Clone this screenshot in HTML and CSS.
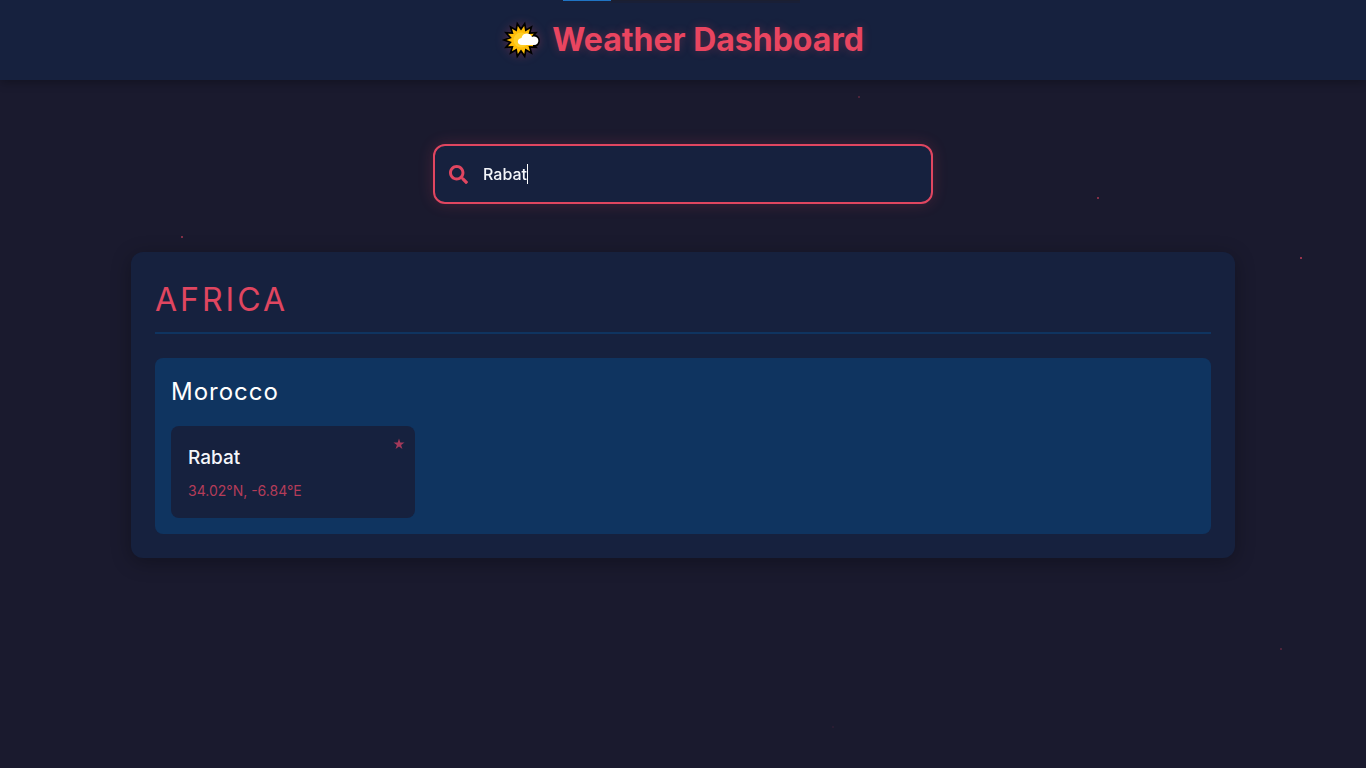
FILE: index.html
```html
<!DOCTYPE html>
<html lang="en">
<head>
<meta charset="utf-8">
<meta name="viewport" content="width=device-width, initial-scale=1">
<title>Weather Dashboard</title>
<link rel="stylesheet" href="styles.css">
</head>
<body>
<div class="particles" aria-hidden="true">
  <i class="particle p1"></i><i class="particle p2"></i><i class="particle p3"></i><i class="particle p4"></i><i class="particle p5"></i><i class="particle p6"></i>
</div>
<div class="loading-bar" aria-hidden="true"><span class="loading-fill"></span></div>
<header class="header">
  <h1 class="title">
    <svg class="sun" viewBox="-1 0 38 38" aria-hidden="true">
      <path d="M18 9.500L21.200 4.900L22.200 10.400L27 7.800L25.500 13L31 12.700L27.200 17L32.500 19L27.200 21L31 25.300L25.500 25L27 30.200L22.200 27.600L21.200 33.100L18 28.500L14.800 33.100L13.800 27.600L9 30.200L10.500 25L5 25.300L8.800 21L3.500 19L8.800 17L5 12.700L10.500 13L9 7.800L13.800 10.400L14.800 4.900Z" fill="#ffbd08" stroke="#000" stroke-width="3.400" stroke-linejoin="miter" paint-order="stroke"/>
      <circle cx="18" cy="19" r="7.500" fill="#ffce25"/>
      <path d="M30 13.500C37 13 38.500 21 35 24.500Q33 26 30 26" fill="#000"/>
      <path d="M19 24C13.500 24 13.500 17.500 18.500 17C19.500 11.500 27 11 29 16C34 14 37 19 34.500 22.500Q33 24 31 24Z" fill="#fff"/>
    </svg>
    <span>Weather Dashboard</span>
  </h1>
</header>
<main class="main">
  <form class="search">
    <label class="search-label" for="city">
      <svg class="search-icon" viewBox="0 0 512 512" role="img" aria-label="Search city"><path fill="currentColor" d="M505 442.700L405.300 343c-4.500-4.500-10.600-7-17-7H372c27.600-35.300 44-79.700 44-128C416 93.100 322.900 0 208 0S0 93.100 0 208s93.100 208 208 208c48.300 0 92.700-16.400 128-44v16.300c0 6.400 2.500 12.500 7 17l99.700 99.700c9.400 9.400 24.600 9.400 33.900 0l28.300-28.300c9.400-9.400 9.400-24.600.1-34zM208 336c-70.700 0-128-57.200-128-128 0-70.700 57.200-128 128-128 70.700 0 128 57.200 128 128 0 70.700-57.200 128-128 128z"/></svg>
    </label>
    <input class="search-input" id="city" type="text" value="Rabat" autocomplete="off" spellcheck="false">
    <span class="caret" aria-hidden="true"></span>
  </form>
  <section class="continent">
    <h2 class="continent-name">AFRICA</h2>
    <section class="country">
      <h3 class="country-name">Morocco</h3>
      <div class="cities">
        <a class="city" href="#rabat">
          <span class="city-name">Rabat</span>
          <span class="coords">34.02°N, -6.84°E</span>
          <svg class="star" viewBox="0 0 12 12" aria-hidden="true"><path fill="currentColor" d="M6 .5L7.300 4.500H11.500L8.100 7L9.400 11L6 8.500L2.600 11L3.900 7L.5 4.500H4.700Z"/></svg>
        </a>
      </div>
    </section>
  </section>
</main>
</body>
</html>
```
FILE: styles.css
```css
* { box-sizing: border-box; }
body {
  margin: 0;
  min-height: 100vh;
  background: #1a1a2e;
  color: #fff;
  font-family: Inter, "Liberation Sans", sans-serif;
}
h1, h2, h3 { margin: 0; }
.header {
  display: flex;
  justify-content: center;
  padding: 16px;
  background: #16213e;
  box-shadow: 0 2px 10px rgba(0, 0, 0, .3);
}
.title {
  display: flex;
  align-items: center;
  gap: 12px;
  font-size: 32px;
  line-height: 48px;
  font-weight: 700;
  color: #e94560;
  text-shadow: 0 0 10px rgba(233, 69, 96, .3);
}
.sun {
  width: 38px;
  height: 38px;
  overflow: visible;
  filter: drop-shadow(0 0 5px rgba(233, 69, 96, .3));
}
.loading-bar {
  position: absolute;
  top: 0;
  left: calc(50% - 120px);
  width: 237px;
  height: 1px;
  background: #1b1f2e;
}
.loading-bar::after {
  content: "";
  position: absolute;
  inset: 0 0 auto 48px;
  height: 3px;
  background: #1b2033;
  opacity: .7;
}
.loading-fill {
  display: block;
  width: 48px;
  height: 1px;
  background: #1f74c4;
}
.main {
  max-width: 1168px;
  margin: 0 auto;
  padding: 64px 32px 32px;
}
.search {
  position: relative;
  display: flex;
  align-items: center;
  max-width: 500px;
  height: 60px;
  margin: 0 auto 48px;
  border: 2px solid #e04660;
  border-radius: 12px;
  background: #16213e;
  box-shadow: 0 0 15px rgba(233, 69, 96, .2);
}
.search-label {
  display: flex;
  padding: 0 15px 0 14px;
  color: #e04660;
}
.search-icon {
  width: 19px;
  height: 19px;
}
.search-input {
  flex: 1;
  min-width: 0;
  height: 100%;
  padding: 0 16px 0 0;
  border: 0;
  outline: 0;
  background: none;
  color: #f4f6fa;
  font: 500 16px Inter, "Liberation Sans", sans-serif;
}
.caret {
  position: absolute;
  left: 92px;
  top: 18px;
  width: 1px;
  height: 20px;
  background: #fff;
}
.continent {
  padding: 24px;
  border-radius: 12px;
  background: #16213e;
  box-shadow: 0 4px 20px rgba(0, 0, 0, .3);
}
.continent-name {
  margin-bottom: 24px;
  padding-bottom: 8px;
  border-bottom: 2px solid #0f3460;
  font-size: 32px;
  line-height: 48px;
  font-weight: 400;
  letter-spacing: 3px;
  color: #e04660;
}
.country {
  padding: 16px;
  border-radius: 8px;
  background: #0f3460;
}
.country-name {
  margin-bottom: 16px;
  font-size: 24px;
  line-height: 36px;
  font-weight: 400;
  letter-spacing: 1px;
  color: #fff;
}
.cities {
  display: grid;
  grid-template-columns: repeat(auto-fill, minmax(240px, 1fr));
  gap: 16px;
}
.city {
  position: relative;
  display: flex;
  flex-direction: column;
  gap: 6px;
  padding: 16px 17px;
  border-radius: 8px;
  background: #16213e;
  color: #f4f6fa;
  text-decoration: none;
}
.city-name {
  font-size: 19px;
  line-height: 32px;
  font-weight: 500;
}
.coords {
  font-size: 14px;
  line-height: 22px;
  color: #b43c59;
}
.star {
  position: absolute;
  top: 12px;
  right: 10px;
  width: 12px;
  height: 12px;
  color: #a3395a;
}
.particles {
  position: fixed;
  inset: 0;
  pointer-events: none;
}
.particle {
  position: absolute;
  width: 2px;
  height: 2px;
  background: #e94560;
}
.p1 { left: 858px; top: 96px; opacity: .25; }
.p2 { left: 1097px; top: 197px; opacity: .5; }
.p3 { left: 181px; top: 236px; opacity: .5; }
.p4 { left: 1300px; top: 257px; opacity: .6; }
.p5 { left: 1280px; top: 648px; opacity: .25; }
.p6 { left: 832px; top: 726px; opacity: .08; }
```
